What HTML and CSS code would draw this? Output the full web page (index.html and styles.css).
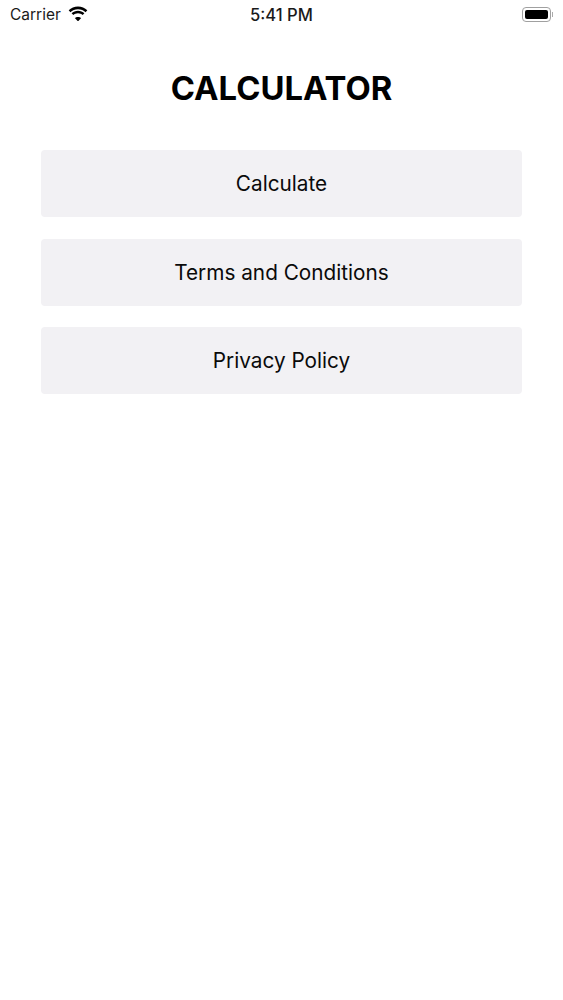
FILE: index.html
```html
<!DOCTYPE html>
<html lang="en">
<head>
<meta charset="utf-8">
<title>Calculator</title>
<link rel="stylesheet" href="styles.css">
</head>
<body>
<header class="status">
  <div class="status-left">
    <span class="carrier">Carrier</span>
    <svg class="wifi" width="20" height="15" viewBox="0 0 20 15"><path d="M10 3.2c3 0 5.6 1.1 7.6 3l1.7-1.900C16.900 2 13.600.6 10 .6S3.100 2 .7 4.300l1.700 1.900c2-1.900 4.600-3 7.600-3z"/><path d="M10 7.300c1.800 0 3.400.7 4.700 1.800l1.700-1.900C14.700 5.700 12.500 4.800 10 4.800s-4.700.9-6.400 2.400l1.700 1.900c1.300-1.100 2.900-1.800 4.700-1.800z"/><path d="M10 10.900c-1.300 0-2.400.5-3.200 1.200L10 15.400l3.200-3.300c-.8-.7-1.900-1.200-3.200-1.200z"/></svg>
  </div>
  <span class="time">5:41 PM</span>
  <div class="status-right">
    <span class="battery"><span class="battery-fill"></span></span>
    <span class="battery-cap"></span>
  </div>
</header>
<main class="content">
  <h1 class="title">CALCULATOR</h1>
  <nav class="menu">
    <a class="menu-item">Calculate</a>
    <a class="menu-item">Terms and Conditions</a>
    <a class="menu-item">Privacy Policy</a>
  </nav>
</main>
</body>
</html>
```
FILE: styles.css
```css
* { box-sizing: border-box; }
html, body { margin: 0; padding: 0; }
body {
  width: 563px;
  height: 1000px;
  background: #fff;
  color: #000;
  font-family: Inter, "Liberation Sans", sans-serif;
  overflow: hidden;
}
.status {
  display: grid;
  grid-template-columns: 1fr auto 1fr;
  align-items: center;
  height: 29px;
  padding: 0 10px 0 10px;
}
.status-left { display: flex; align-items: center; gap: 7px; }
.carrier { font-size: 15.5px; color: #1a1a1a; }
.wifi { display: block; fill: #000; margin-top: -3px; }
.time { font-size: 16.6px; font-weight: 500; color: #1a1a1a; }
.status-right { display: flex; align-items: center; justify-content: flex-end; gap: 1px; }
.battery {
  display: block;
  width: 29px;
  height: 15px;
  padding: 2px;
  border: 1px solid #a0a0a0;
  border-radius: 4px;
}
.battery-fill { display: block; height: 100%; background: #000; border-radius: 2px; }
.battery-cap { display: block; width: 1px; height: 5px; background: #aaa; }
.content { display: flex; flex-direction: column; padding: 0 41px; }
.title {
  margin: 39px 0 0;
  height: 40px;
  font-size: 32.8px;
  line-height: 40px;
  font-weight: 700;
  text-align: center;
}
.menu { display: flex; flex-direction: column; gap: 21.5px; margin-top: 42px; }
.menu-item {
  display: flex;
  align-items: center;
  justify-content: center;
  height: 67px;
  background: #f2f1f4;
  border-radius: 4px;
  font-size: 20.75px;
  color: #0a0a0a;
}
```
